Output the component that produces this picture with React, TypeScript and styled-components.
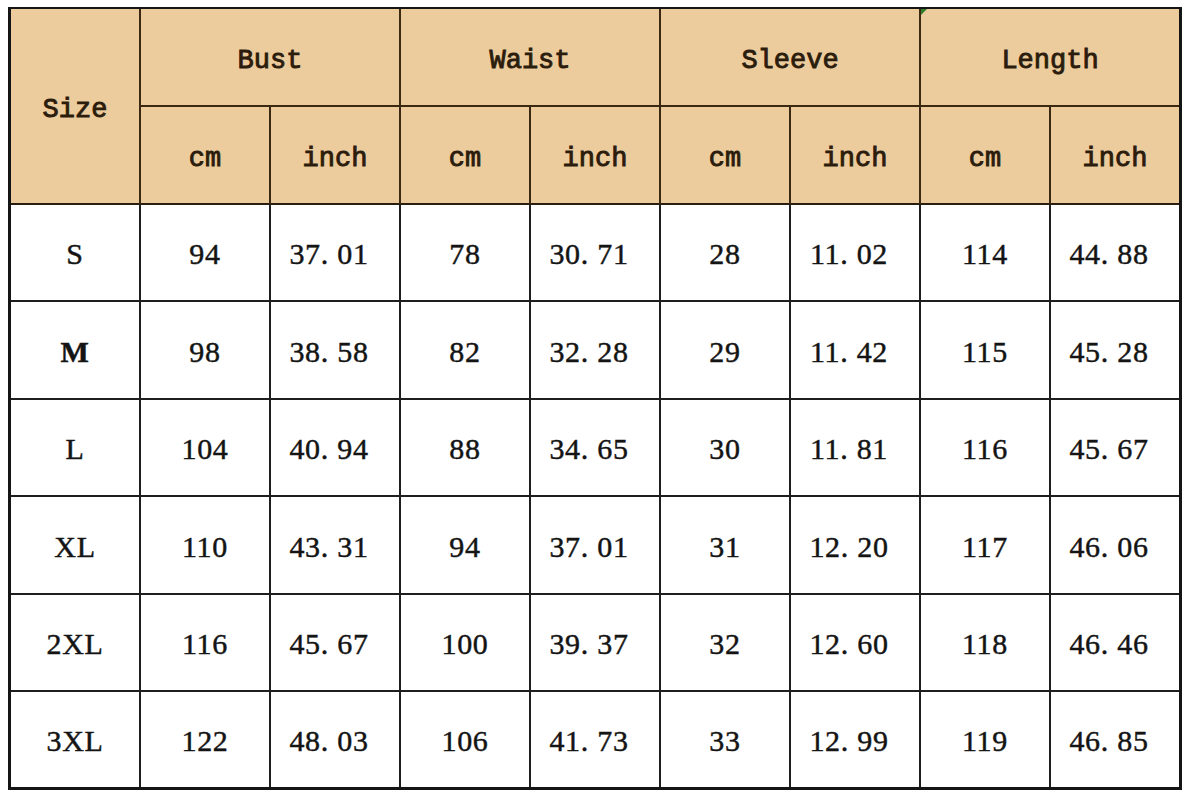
import React from "react";
import styled, { createGlobalStyle, css } from "styled-components";

const GlobalStyle = createGlobalStyle`
  html, body {
    margin: 0;
    padding: 0;
    background: #ffffff;
  }
  body {
    font-family: "Liberation Serif", serif;
  }
`;

const Page = styled.div`
  padding: 7px 0 0 8px;
  background: #ffffff;
  width: 1189px;
  height: 800px;
  box-sizing: border-box;
`;

const Grid = styled.div`
  display: grid;
  grid-template-columns: repeat(8, 130px) 128px;
  grid-template-rows: 98px 98px 97px 98px 97px 98px 97px 95px;
  width: 1174px;
  height: 783px;
  box-sizing: border-box;
  border-style: solid;
  border-color: #151515;
  border-width: 2px 3px 3px 3px;
`;

const Cell = styled.div<{
  $head?: boolean;
  $colSpan?: number;
  $rowSpan?: number;
  $lastCol?: boolean;
  $lastRow?: boolean;
  $darkBottom?: boolean;
  $decimal?: boolean;
}>`
  position: relative;
  display: flex;
  align-items: center;
  justify-content: center;
  box-sizing: border-box;
  grid-column: span ${(p) => p.$colSpan ?? 1};
  grid-row: span ${(p) => p.$rowSpan ?? 1};
  border-right: ${(p) => (p.$lastCol ? "none" : "2px solid")};
  border-bottom: ${(p) => (p.$lastRow ? "none" : "2px solid")};
  border-right-color: ${(p) => (p.$head ? "#3a2812" : "#1e1e1e")};
  border-bottom-color: ${(p) =>
    p.$darkBottom ? "#2a1e10" : p.$head ? "#3a2812" : "#1e1e1e"};
  ${(p) =>
    p.$head
      ? css`
          background: #eccb9d;
          color: #2b1c0c;
          font-family: "Liberation Mono", "Courier New", monospace;
          font-weight: 700;
          font-size: 27px;
          -webkit-text-stroke: 0.9px #2b1c0c;
          padding-top: 8px;
        `
      : css`
          background: #ffffff;
          color: #141414;
          font-family: "Liberation Serif", "Times New Roman", serif;
          font-size: 30px;
          letter-spacing: 0.7px;
          -webkit-text-stroke: 0.45px #141414;
          padding-top: 3px;
          padding-right: ${p.$decimal ? "12px" : "0"};
        `}
`;

const Label = styled.span<{ $bold?: boolean }>`
  font-weight: ${(p) => (p.$bold ? 700 : 400)};
  white-space: pre;
`;

const CommentMark = styled.span`
  position: absolute;
  top: 0;
  left: 0;
  width: 0;
  height: 0;
  border-top: 6px solid #2f7d2a;
  border-right: 6px solid transparent;
`;

const groups = ["Bust", "Waist", "Sleeve", "Length"];

const rows: [string, string[]][] = [
  ["S", ["94", "37. 01", "78", "30. 71", "28", "11. 02", "114", "44. 88"]],
  ["M", ["98", "38. 58", "82", "32. 28", "29", "11. 42", "115", "45. 28"]],
  ["L", ["104", "40. 94", "88", "34. 65", "30", "11. 81", "116", "45. 67"]],
  ["XL", ["110", "43. 31", "94", "37. 01", "31", "12. 20", "117", "46. 06"]],
  ["2XL", ["116", "45. 67", "100", "39. 37", "32", "12. 60", "118", "46. 46"]],
  ["3XL", ["122", "48. 03", "106", "41. 73", "33", "12. 99", "119", "46. 85"]],
];

export default function App() {
  return (
    <>
      <GlobalStyle />
      <Page>
        <Grid>
          <Cell $head $rowSpan={2} $darkBottom>
            <Label>Size</Label>
          </Cell>
          {groups.map((g, i) => (
            <Cell key={g} $head $colSpan={2} $lastCol={i === groups.length - 1}>
              {g === "Length" && <CommentMark />}
              <Label>{g}</Label>
            </Cell>
          ))}
          {groups.map((g, i) => (
            <React.Fragment key={g + "-units"}>
              <Cell $head $darkBottom>
                <Label>cm</Label>
              </Cell>
              <Cell $head $darkBottom $lastCol={i === groups.length - 1}>
                <Label>inch</Label>
              </Cell>
            </React.Fragment>
          ))}
          {rows.map(([size, values], r) => (
            <React.Fragment key={size}>
              <Cell $lastRow={r === rows.length - 1}>
                <Label $bold={size === "M"}>{size}</Label>
              </Cell>
              {values.map((v, c) => (
                <Cell
                  key={c}
                  $lastRow={r === rows.length - 1}
                  $lastCol={c === values.length - 1}
                  $decimal={v.includes(".")}
                >
                  <Label>{v}</Label>
                </Cell>
              ))}
            </React.Fragment>
          ))}
        </Grid>
      </Page>
    </>
  );
}
